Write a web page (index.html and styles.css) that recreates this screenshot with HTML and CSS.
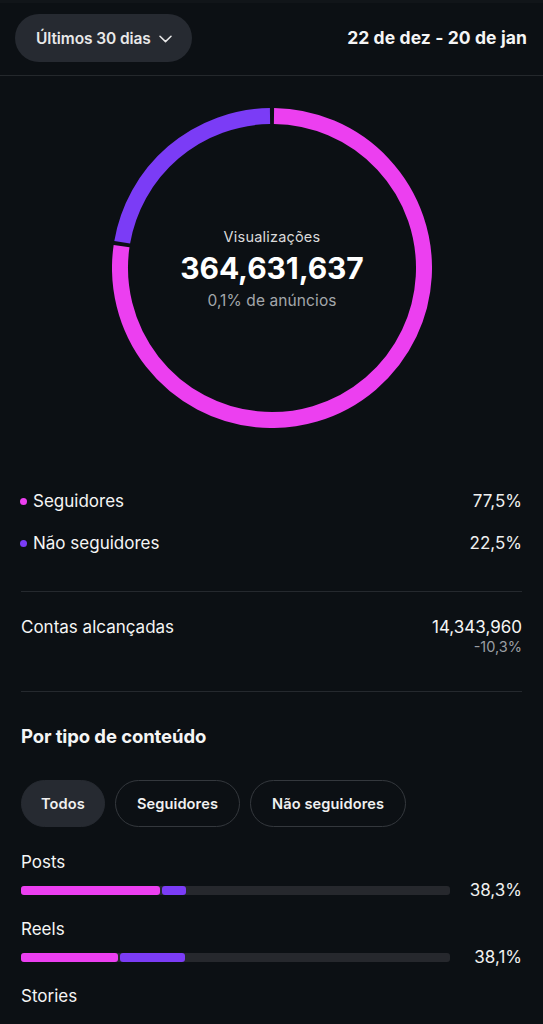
FILE: index.html
```html
<!DOCTYPE html>
<html lang="pt-BR">
<head>
<meta charset="utf-8">
<title>Visualizações</title>
<link rel="stylesheet" href="styles.css">
</head>
<body>
<div class="screen">
  <header class="topbar">
    <button class="period-pill">
      <span>Últimos 30 dias</span>
      <svg class="chevron" width="13" height="8" viewBox="0 0 13 8"><path d="M1 1.2 L6.5 6.6 L12 1.2" fill="none" stroke="#e8e8e8" stroke-width="1.5" stroke-linecap="round" stroke-linejoin="round"/></svg>
    </button>
    <div class="date-range">22 de dez - 20 de jan</div>
  </header>

  <section class="donut">
    <svg class="ring" width="320" height="320" viewBox="0 0 320 320">
      <path d="M 161.99 8.01 A 152 152 0 1 1 9.57 138.19" fill="none" stroke="#ec3ff0" stroke-width="16" stroke-linecap="butt"/>
      <path d="M 10.2 134.26 A 152 152 0 0 1 158.01 8.01" fill="none" stroke="#7b3cf6" stroke-width="16" stroke-linecap="butt"/>
    </svg>
    <div class="donut-center">
      <div class="donut-label">Visualizações</div>
      <div class="donut-value">364,631,637</div>
      <div class="donut-sub">0,1% de anúncios</div>
    </div>
  </section>

  <section class="legend">
    <div class="legend-row">
      <span class="legend-name"><span class="dot dot-pink"></span>Seguidores</span>
      <span class="legend-val">77,5%</span>
    </div>
    <div class="legend-row">
      <span class="legend-name"><span class="dot dot-purple"></span>Não seguidores</span>
      <span class="legend-val">22,5%</span>
    </div>
  </section>

  <hr class="divider divider-a">

  <section class="reach">
    <span class="reach-name">Contas alcançadas</span>
    <div class="reach-vals">
      <div class="reach-num">14,343,960</div>
      <div class="reach-delta">-10,3%</div>
    </div>
  </section>

  <hr class="divider divider-b">

  <section class="content-type">
    <h2 class="section-title">Por tipo de conteúdo</h2>
    <div class="chips">
      <button class="chip chip-active">Todos</button>
      <button class="chip">Seguidores</button>
      <button class="chip">Não seguidores</button>
    </div>

    <div class="type-item">
      <div class="type-name">Posts</div>
      <div class="type-row">
        <div class="track">
          <div class="seg seg-pink" style="width:139px"></div>
          <div class="seg seg-purple" style="width:24px"></div>
        </div>
        <span class="type-pct">38,3%</span>
      </div>
    </div>

    <div class="type-item">
      <div class="type-name">Reels</div>
      <div class="type-row">
        <div class="track">
          <div class="seg seg-pink" style="width:97px"></div>
          <div class="seg seg-purple" style="width:65px"></div>
        </div>
        <span class="type-pct">38,1%</span>
      </div>
    </div>

    <div class="type-item">
      <div class="type-name">Stories</div>
    </div>
  </section>
</div>
</body>
</html>
```

FILE: styles.css
```css
* { box-sizing: border-box; }

html, body {
  margin: 0;
  padding: 0;
  background: #0c1014;
}

body {
  font-family: Inter, "Noto Sans", "Liberation Sans", sans-serif;
  color: #f5f5f5;
  -webkit-font-smoothing: antialiased;
}

.screen {
  width: 543px;
  height: 1024px;
  overflow: hidden;
}

.topbar {
  height: 76px;
  display: flex;
  align-items: flex-start;
  justify-content: space-between;
  padding: 14px 16px 0 15px;
  border-bottom: 1px solid #24282c;
  background: linear-gradient(#111519 0, #111519 3px, #0c1014 3px);
}

.period-pill {
  height: 48px;
  width: 177px;
  border: none;
  border-radius: 24px;
  background: #262a31;
  color: #e8e8e8;
  font-family: inherit;
  font-size: 15.5px;
  font-weight: 600;
  display: flex;
  align-items: center;
  gap: 8px;
  padding: 0 0 0 21px;
  letter-spacing: -0.1px;
}

.chevron { display: block; margin-top: 1px; }

.date-range {
  margin-top: 12px;
  font-size: 17.5px;
  font-weight: 700;
  color: #f5f5f5;
  letter-spacing: 0.1px;
  line-height: 24px;
}

.donut {
  margin-top: 32px;
  display: grid;
  justify-content: center;
  padding-left: 1px;
}

.ring, .donut-center {
  grid-area: 1 / 1;
}

.donut-center {
  align-self: center;
  justify-self: center;
  text-align: center;
  padding-top: 1px;
}

.donut-label {
  font-size: 14.5px;
  color: #dadada;
  line-height: 20px;
  letter-spacing: 0.2px;
}

.donut-value {
  font-size: 30px;
  font-weight: 700;
  line-height: 36px;
  letter-spacing: -0.1px;
  color: #ffffff;
  margin-top: 3px;
}

.donut-sub {
  font-size: 15.5px;
  color: #a3a7ab;
  line-height: 20px;
  margin-top: 5px;
  letter-spacing: 0.1px;
}

.legend {
  margin-top: 52px;
  padding: 0 21px 0 20px;
}

.legend-row {
  height: 42px;
  display: flex;
  align-items: center;
  justify-content: space-between;
  font-size: 17px;
}

.legend-name {
  display: flex;
  align-items: center;
  gap: 6px;
}

.dot {
  width: 7px;
  height: 7px;
  border-radius: 50%;
  display: inline-block;
}
.dot-pink { background: #ec3ff0; }
.dot-purple { background: #7b3cf6; }

.legend-val { color: #f0f0f0; }

.divider {
  border: none;
  height: 1px;
  background: #25292e;
  margin: 0 21px;
}
.divider-a { margin-top: 27px; }

.reach {
  display: flex;
  justify-content: space-between;
  align-items: flex-start;
  padding: 24px 21px 35px 21px;
}

.reach-name {
  font-size: 17px;
  line-height: 22px;
}

.reach-vals { text-align: right; }

.reach-num {
  font-size: 17px;
  line-height: 22px;
}

.reach-delta {
  font-size: 14.5px;
  line-height: 18px;
  color: #9a9ea3;
}

.content-type {
  padding: 0 21px;
}

.section-title {
  margin: 32px 0 0;
  font-size: 18.5px;
  font-weight: 700;
  line-height: 24px;
  letter-spacing: -0.1px;
}

.chips {
  margin-top: 32px;
  display: flex;
  gap: 10px;
}

.chip {
  height: 47px;
  border-radius: 24px;
  border: 1px solid #34383d;
  background: transparent;
  color: #f0f0f0;
  font-family: inherit;
  font-size: 14.6px;
  font-weight: 600;
  padding: 0 21px;
  letter-spacing: 0.1px;
}

.chip-active {
  background: #262a31;
  border-color: #262a31;
  padding: 0 19px;
}

.type-item { margin-top: 16px; }
.chips + .type-item { margin-top: 24px; }

.type-name {
  font-size: 17px;
  line-height: 22px;
}

.type-row {
  margin-top: 5px;
  height: 24px;
  display: flex;
  align-items: center;
  justify-content: space-between;
}

.track {
  width: 429px;
  height: 9px;
  border-radius: 3px;
  background: #26282d;
  display: flex;
  gap: 2px;
}

.seg {
  height: 9px;
  border-radius: 3px;
}
.seg-pink { background: #ec3ff0; }
.seg-purple { background: #7b3cf6; }

.type-pct {
  font-size: 17px;
  color: #f0f0f0;
}
```
